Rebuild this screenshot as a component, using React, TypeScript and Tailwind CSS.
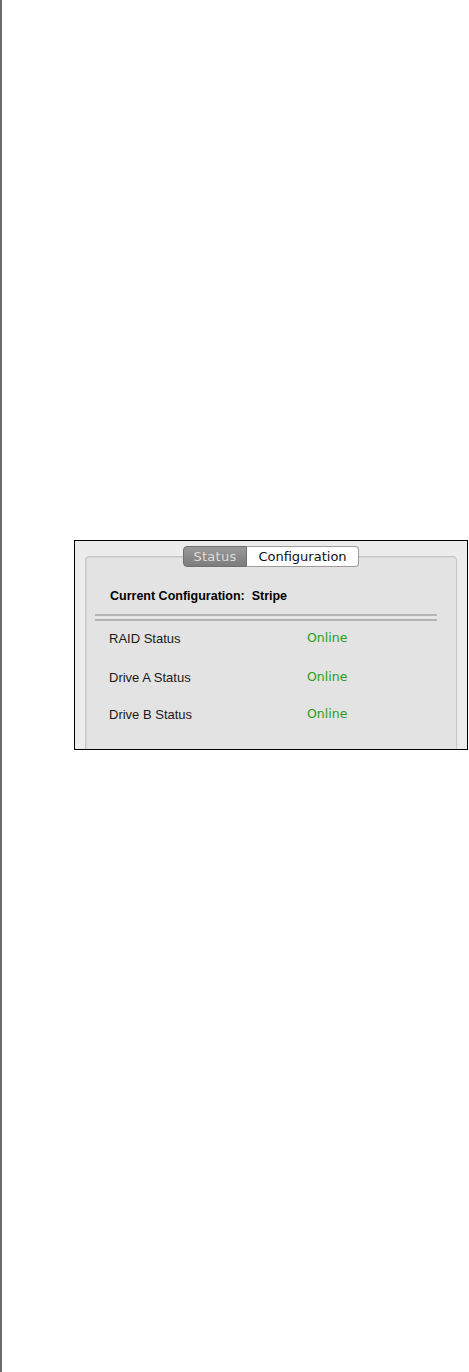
const rows = [
  { label: "RAID Status", value: "Online", top: "mt-[10px]" },
  { label: "Drive A Status", value: "Online", top: "mt-[24px]" },
  { label: "Drive B Status", value: "Online", top: "mt-[22px]" },
]

export default function App() {
  return (
    <div className="h-[1372px] w-full border-l-2 border-[#6b6b6b] bg-white pt-[540px]">
      <div className="ml-[72px] h-[210px] w-[394px] overflow-hidden border border-black bg-[#ececec] px-[10px] pt-[5px]">
        {/* tab switcher */}
        <div className="relative z-10 flex h-[21px] justify-center font-['DejaVu_Sans',sans-serif] text-[13px] leading-[19px]">
          <div className="w-[64px] rounded-l-[4px] border border-[#6f6f6f] bg-gradient-to-b from-[#9a9a9a] to-[#7c7c7c] text-center tracking-[0.3px] text-[#dcdcdc]">
            Status
          </div>
          <div className="w-[112px] rounded-r-[4px] border border-l-0 border-[#9c9c9c] bg-white text-center text-[#111]">
            Configuration
          </div>
        </div>

        <div className="-mt-[11px] h-[240px] rounded-[4px] border border-[#c6c6c6] bg-[#e3e3e3] shadow-[inset_1px_1px_0_#d6d6d6] font-['Liberation_Sans',sans-serif]">
          <div className="ml-[24px] mt-[31px] text-[12.5px] font-bold leading-[16px] text-black">
            Current Configuration:&nbsp; Stripe
          </div>
          <div className="ml-[9px] mr-[19px] mt-[10px] border-y-2 border-[#b4b4b4] py-[1px]">
            <div className="h-px bg-[#e9e9e9]" />
          </div>
          {rows.map((row) => (
            <div key={row.label} className={`flex h-[15px] items-center ${row.top}`}>
              <span className="ml-[23px] w-[198px] text-[13px] text-[#1a1a1a]">{row.label}</span>
              <span className="font-['DejaVu_Sans',sans-serif] text-[12.5px] text-[#22a020]">{row.value}</span>
            </div>
          ))}
        </div>
      </div>
    </div>
  )
}
